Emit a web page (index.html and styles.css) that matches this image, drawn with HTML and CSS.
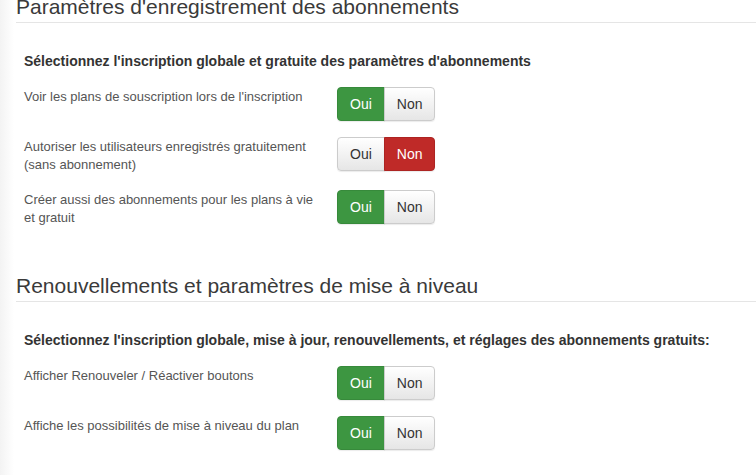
FILE: index.html
```html
<!DOCTYPE html>
<html lang="fr">
<head>
<meta charset="utf-8">
<link rel="stylesheet" href="styles.css">
</head>
<body>
<div class="page">
  <section class="section">
    <h2 class="section-title">Paramètres d'enregistrement des abonnements</h2>
    <p class="legend">Sélectionnez l'inscription globale et gratuite des paramètres d'abonnements</p>
    <div class="control-group">
      <div class="control-label">Voir les plans de souscription lors de l'inscription</div>
      <div class="btn-group"><span class="btn btn-yes active">Oui</span><span class="btn btn-no">Non</span></div>
    </div>
    <div class="control-group">
      <div class="control-label">Autoriser les utilisateurs enregistrés gratuitement (sans abonnement)</div>
      <div class="btn-group"><span class="btn btn-yes">Oui</span><span class="btn btn-no active">Non</span></div>
    </div>
    <div class="control-group">
      <div class="control-label">Créer aussi des abonnements pour les plans à vie et gratuit</div>
      <div class="btn-group"><span class="btn btn-yes active">Oui</span><span class="btn btn-no">Non</span></div>
    </div>
  </section>
  <section class="section">
    <h2 class="section-title">Renouvellements et paramètres de mise à niveau</h2>
    <p class="legend">Sélectionnez l'inscription globale, mise à jour, renouvellements, et réglages des abonnements gratuits:</p>
    <div class="control-group">
      <div class="control-label">Afficher Renouveler / Réactiver boutons</div>
      <div class="btn-group"><span class="btn btn-yes active">Oui</span><span class="btn btn-no">Non</span></div>
    </div>
    <div class="control-group">
      <div class="control-label">Affiche les possibilités de mise à niveau du plan</div>
      <div class="btn-group"><span class="btn btn-yes active">Oui</span><span class="btn btn-no">Non</span></div>
    </div>
  </section>
</div>
</body>
</html>
```

FILE: styles.css
```css
html, body {
  margin: 0;
  padding: 0;
}
body {
  font-family: "Liberation Sans", Arial, sans-serif;
  color: #333;
  background: linear-gradient(to right, #f3f3f3 0, #fff 14px);
  overflow: hidden;
}
.page {
  padding-left: 16px;
  margin-top: -5px;
}
.section {
  margin-bottom: 47px;
}
.section-title {
  font-size: 21px;
  font-weight: normal;
  line-height: 24px;
  color: #3a3a3a;
  margin: 0;
  padding-bottom: 3px;
  border-bottom: 1px solid #e5e5e5;
}
.legend {
  margin: 29px 0 17px 8px;
  font-size: 14px;
  font-weight: bold;
  line-height: 18px;
  color: #333;
}
.control-group {
  display: grid;
  grid-template-columns: 300px auto;
  column-gap: 13px;
  align-items: start;
  margin-left: 8px;
  margin-bottom: 16px;
}
.control-label {
  font-size: 13px;
  line-height: 18px;
  color: #555;
  padding-top: 1px;
}
.btn-group {
  display: flex;
}
.btn {
  display: inline-block;
  font-size: 14px;
  line-height: 20px;
  padding: 6px 12px;
  border: 1px solid #ccc;
  color: #333;
  background: linear-gradient(to bottom, #ffffff, #e6e6e6);
  box-shadow: 0 1px 1px rgba(0,0,0,0.08);
}
.btn-yes {
  border-radius: 4px 0 0 4px;
}
.btn-no {
  border-radius: 0 4px 4px 0;
  margin-left: -1px;
}
.btn-yes.active {
  background: #3d9641;
  border-color: #378a3b;
  color: #fff;
}
.btn-no.active {
  background: #bf2a28;
  border-color: #ad2422;
  color: #fff;
}
```
